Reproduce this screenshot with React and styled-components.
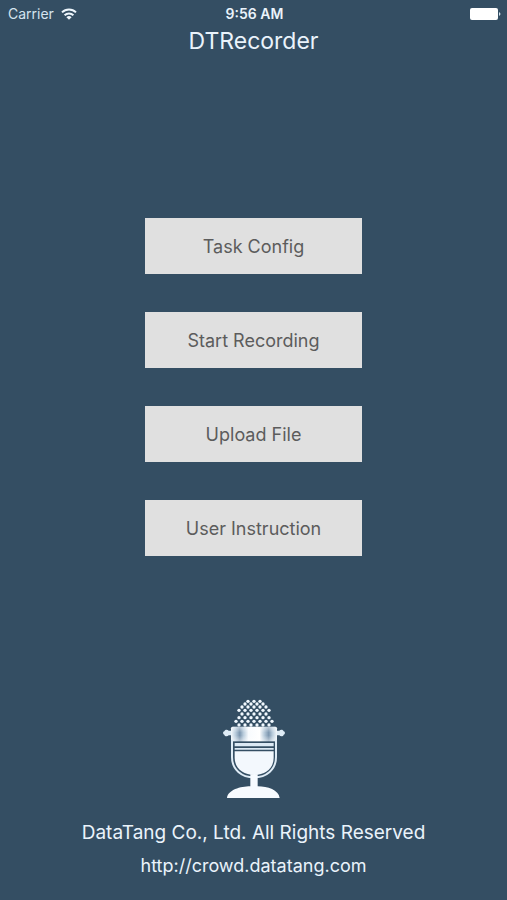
import React from 'react';
import styled, { createGlobalStyle } from 'styled-components';

const GlobalStyle = createGlobalStyle`
  * {
    box-sizing: border-box;
  }

  body {
    margin: 0;
    background: #344e63;
    font-family: Inter, 'Liberation Sans', sans-serif;
  }
`;

const Screen = styled.div`
  display: flex;
  flex-direction: column;
  min-height: 100vh;
  color: #eaf3fb;
`;

const StatusBar = styled.div`
  display: grid;
  grid-template-columns: 1fr auto 1fr;
  align-items: center;
  height: 26px;
  padding: 2px 6px 0 8px;
  font-size: 14px;
  line-height: 16px;
`;

const Carrier = styled.div`
  display: flex;
  align-items: center;
  gap: 7px;
  color: #d5e4ef;
`;

const Time = styled.time`
  font-weight: 600;
`;

const Battery = styled.svg`
  justify-self: end;
  display: block;
`;

const Title = styled.h1`
  margin: 0;
  font-size: 23px;
  font-weight: 400;
  line-height: 30px;
  text-align: center;
`;

const Menu = styled.nav`
  display: flex;
  flex: 1;
  flex-direction: column;
  align-items: center;
  gap: 38px;
  padding: 162px 16px 48px;
`;

const MenuButton = styled.button`
  width: 100%;
  max-width: 217px;
  height: 56px;
  padding: 2px 0 0;
  border: none;
  background: #e0e0e0;
  color: #5c5c5c;
  font-family: inherit;
  font-size: 18px;
  line-height: 24px;
  cursor: pointer;

  &:active {
    background: #cfcfcf;
  }
`;

const Footer = styled.footer`
  display: flex;
  flex-direction: column;
  align-items: center;
  padding-bottom: 18px;
  text-align: center;

  svg {
    display: block;
    margin-bottom: 17px;
  }
`;

const FooterText = styled.p`
  margin: 0;
  font-size: 19px;
  line-height: 33px;
`;

const FooterLink = styled.a`
  color: inherit;
  font-size: 18px;
  line-height: 33px;
  text-decoration: none;
`;

const menuItems = ['Task Config', 'Start Recording', 'Upload File', 'User Instruction'];

// dots of the grille, one entry per row: [y, number of dots]
const grille = [
  [33, 3],
  [41, 4],
  [50, 5],
  [60, 6],
  [71, 5],
  [82, 6],
  [93, 7],
  [104, 6],
];
const DOT_PITCH = 18;

const WifiIcon = () => (
  <svg width="16" height="12" viewBox="0 0 16 12" fill="none" stroke="#eef6fc" strokeWidth="2">
    <path d="M1 4.4a10 10 0 0 1 14 0" />
    <path d="M3.6 7.2a6.3 6.3 0 0 1 8.8 0" />
    <path d="M8 11.8 5.4 9.2a3.8 3.8 0 0 1 5.2 0z" fill="#eef6fc" stroke="none" />
  </svg>
);

const BatteryIcon = () => (
  <Battery width="31" height="12" viewBox="0 0 31 12" fill="#fff">
    <rect x="0" y="0" width="28" height="12" rx="2" />
    <path d="M29 4c2 1 2 3 0 4z" fill="#d5e4ef" />
  </Battery>
);

const Microphone = () => (
  <svg width="62" height="100" viewBox="39 26 186 300" role="img" aria-label="Microphone">
    <defs>
      <linearGradient id="band">
        <stop offset="0" stopColor="#f4f9fd" />
        <stop offset="0.1" stopColor="#b9ccdc" />
        <stop offset="0.19" stopColor="#7d97b0" />
        <stop offset="0.27" stopColor="#b9ccdc" />
        <stop offset="0.38" stopColor="#f8fbfe" />
        <stop offset="0.62" stopColor="#ffffff" />
        <stop offset="0.72" stopColor="#b9ccdc" />
        <stop offset="0.82" stopColor="#7d97b0" />
        <stop offset="0.9" stopColor="#b9ccdc" />
        <stop offset="1" stopColor="#f4f9fd" />
      </linearGradient>
      <linearGradient id="bandEdge" x2="0" y2="1">
        <stop offset="0" stopColor="#fff" stopOpacity="0.5" />
        <stop offset="0.4" stopColor="#fff" stopOpacity="0" />
        <stop offset="0.6" stopColor="#fff" stopOpacity="0" />
        <stop offset="1" stopColor="#fff" stopOpacity="0.5" />
      </linearGradient>
    </defs>

    {grille.map(([y, count]) =>
      Array.from({ length: count }, (_, i) => (
        <circle
          key={`${y}-${i}`}
          cx={132 + (i - (count - 1) / 2) * DOT_PITCH}
          cy={y}
          r="5"
          fill="#f1f8fe"
        />
      ))
    )}

    <path d="M66 121H56c-3-4-12-4-13 2-5 1-5 9 0 10 1 6 10 6 13 2h10z" fill="#dfecf6" />
    <path d="M198 121h10c3-4 12-4 13 2 5 1 5 9 0 10-1 6-10 6-13 2h-10z" fill="#dfecf6" />
    <rect x="63" y="109" width="138" height="44" rx="5" fill="url(#band)" />
    <rect x="63" y="109" width="138" height="44" rx="5" fill="url(#bandEdge)" />

    <path
      d="M66 148v52c0 38 29 61 66 61s66-23 66-61v-52"
      fill="none"
      stroke="#dfecf6"
      strokeWidth="6"
    />
    <path d="M74 158h117v10H74zM74 173h117v5H74z" fill="#dce9f4" />
    <path d="M74 183h117v19c0 32-25 52-58 52s-59-20-59-52z" fill="#f3f8fd" />
    <path
      d="M121 252h22v36c30 0 63 11 66 35H51c3-24 40-35 70-35z"
      fill="#f7fbff"
    />
  </svg>
);

const App = () => {
  return (
    <>
      <GlobalStyle />
      <Screen>
        <StatusBar>
          <Carrier>
            Carrier
            <WifiIcon />
          </Carrier>
          <Time>9:56 AM</Time>
          <BatteryIcon />
        </StatusBar>
        <Title>DTRecorder</Title>
        <Menu>
          {menuItems.map((item) => (
            <MenuButton key={item} type="button">
              {item}
            </MenuButton>
          ))}
        </Menu>
        <Footer>
          <Microphone />
          <FooterText>DataTang Co., Ltd. All Rights Reserved</FooterText>
          <FooterLink href="http://crowd.datatang.com">http://crowd.datatang.com</FooterLink>
        </Footer>
      </Screen>
    </>
  );
};

export default App;
